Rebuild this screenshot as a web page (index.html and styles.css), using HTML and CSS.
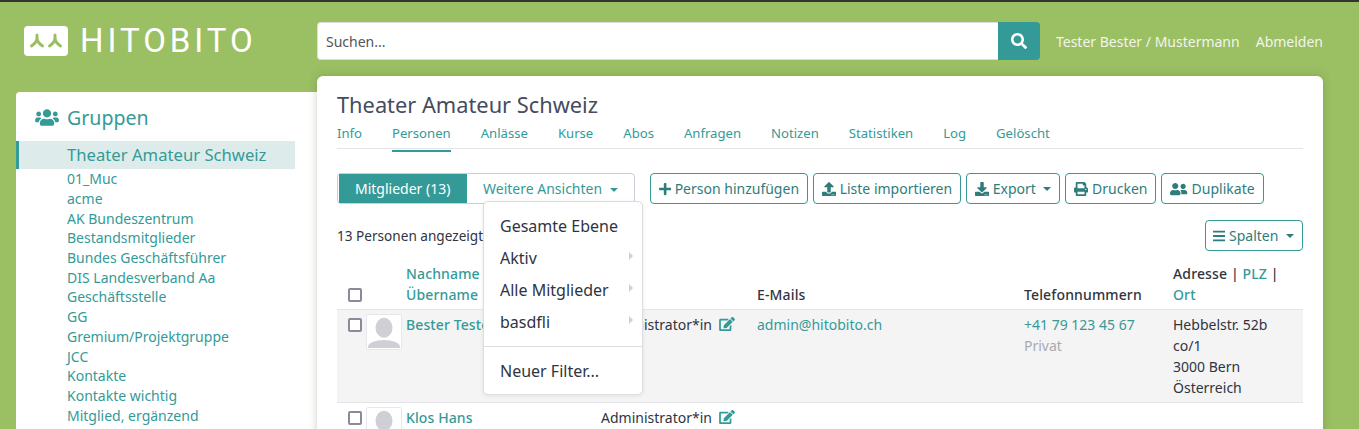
FILE: index.html
```html
<!DOCTYPE html>
<html lang="de">
<head>
  <meta charset="UTF-8">
  <meta name="viewport" content="width=device-width, initial-scale=1.0">
  <title>Theater Amateur Schweiz - Personen</title>
  <link rel="stylesheet" href="styles.css">
</head>
<body>
  <svg class="icon-defs" aria-hidden="true">
    <symbol id="i-users" viewBox="0 0 640 512"><path d="M96 224c35.3 0 64-28.7 64-64s-28.7-64-64-64-64 28.7-64 64 28.7 64 64 64zm448 0c35.3 0 64-28.7 64-64s-28.7-64-64-64-64 28.7-64 64 28.7 64 64 64zm32 32h-64c-17.6 0-33.5 7.1-45.1 18.6 40.3 22.1 68.9 62 75.1 109.4h66c17.7 0 32-14.3 32-32v-32c0-35.3-28.7-64-64-64zm-256 0c61.9 0 112-50.1 112-112S381.9 32 320 32 208 82.1 208 144s50.1 112 112 112zm76.8 32h-8.3c-20.8 10-43.9 16-68.5 16s-47.6-6-68.5-16h-8.3C179.6 288 128 339.6 128 403.2V432c0 26.5 21.5 48 48 48h288c26.5 0 48-21.5 48-48v-28.8c0-63.6-51.6-115.2-115.2-115.2zm-223.7-13.4C161.5 263.1 145.6 256 128 256H64c-35.3 0-64 28.7-64 64v32c0 17.7 14.3 32 32 32h65.9c6.3-47.4 34.9-87.3 75.2-109.4z"/></symbol>
    <symbol id="i-search" viewBox="0 0 512 512"><path d="M505 442.7L405.3 343c-4.5-4.5-10.6-7-17-7H372c27.6-35.3 44-79.7 44-128C416 93.1 322.9 0 208 0S0 93.1 0 208s93.1 208 208 208c48.3 0 92.7-16.4 128-44v16.3c0 6.4 2.5 12.5 7 17l99.7 99.7c9.4 9.4 24.6 9.4 33.9 0l28.3-28.3c9.4-9.4 9.4-24.6.1-34zM208 336c-70.7 0-128-57.2-128-128 0-70.7 57.2-128 128-128 70.7 0 128 57.2 128 128 0 70.7-57.2 128-128 128z"/></symbol>
    <symbol id="i-plus" viewBox="0 0 448 512"><path d="M416 208H272V64c0-17.67-14.33-32-32-32h-32c-17.67 0-32 14.33-32 32v144H32c-17.67 0-32 14.33-32 32v32c0 17.67 14.33 32 32 32h144v144c0 17.67 14.33 32 32 32h32c17.67 0 32-14.33 32-32V304h144c17.67 0 32-14.33 32-32v-32c0-17.67-14.33-32-32-32z"/></symbol>
    <symbol id="i-upload" viewBox="0 0 512 512"><path d="M296 384h-80c-13.3 0-24-10.7-24-24V192h-87.7c-17.8 0-26.7-21.5-14.1-34.1L242.3 5.700c7.500-7.500 19.800-7.500 27.300 0l152.200 152.200c12.600 12.600 3.700 34.100-14.100 34.100H320v168c0 13.300-10.700 24-24 24zm216-8v112c0 13.300-10.700 24-24 24H24c-13.300 0-24-10.700-24-24V376c0-13.300 10.700-24 24-24h136v8c0 30.900 25.100 56 56 56h80c30.900 0 56-25.100 56-56v-8h136c13.300 0 24 10.700 24 24zm-124 88c0-11-9-20-20-20s-20 9-20 20 9 20 20 20 20-9 20-20zm64 0c0-11-9-20-20-20s-20 9-20 20 9 20 20 20 20-9 20-20z"/></symbol>
    <symbol id="i-download" viewBox="0 0 512 512"><path d="M216 0h80c13.3 0 24 10.7 24 24v168h87.7c17.8 0 26.7 21.5 14.1 34.1L269.7 378.3c-7.5 7.5-19.8 7.5-27.3 0L90.1 226.1c-12.6-12.6-3.7-34.1 14.1-34.1H192V24c0-13.3 10.7-24 24-24zm296 376v112c0 13.3-10.7 24-24 24H24c-13.3 0-24-10.7-24-24V376c0-13.3 10.7-24 24-24h146.7l49 49c20.1 20.1 52.5 20.1 72.6 0l49-49H488c13.3 0 24 10.7 24 24zm-124 88c0-11-9-20-20-20s-20 9-20 20 9 20 20 20 20-9 20-20zm64 0c0-11-9-20-20-20s-20 9-20 20 9 20 20 20 20-9 20-20z"/></symbol>
    <symbol id="i-print" viewBox="0 0 512 512"><path d="M448 192V77.25c0-8.49-3.37-16.62-9.37-22.63L393.37 9.37c-6-6-14.14-9.37-22.63-9.37H96C78.33 0 64 14.33 64 32v160c-35.35 0-64 28.65-64 64v112c0 8.84 7.16 16 16 16h48v96c0 17.67 14.33 32 32 32h320c17.67 0 32-14.33 32-32v-96h48c8.84 0 16-7.16 16-16V256c0-35.35-28.65-64-64-64zm-64 256H128v-96h256v96zm0-224H128V64h192v48c0 8.84 7.16 16 16 16h48v96zm48 72c-13.25 0-24-10.75-24-24 0-13.26 10.75-24 24-24s24 10.74 24 24c0 13.25-10.75 24-24 24z"/></symbol>
    <symbol id="i-friends" viewBox="0 0 640 512"><path d="M192 256c61.9 0 112-50.1 112-112S253.9 32 192 32 80 82.1 80 144s50.1 112 112 112zm76.8 32h-8.3c-20.8 10-43.9 16-68.5 16s-47.6-6-68.5-16h-8.3C51.6 288 0 339.6 0 403.2V432c0 26.5 21.5 48 48 48h288c26.5 0 48-21.5 48-48v-28.8c0-63.6-51.6-115.2-115.2-115.2zM480 256c53 0 96-43 96-96s-43-96-96-96-96 43-96 96 43 96 96 96zm48 32h-3.8c-13.9 4.8-28.6 8-44.2 8s-30.3-3.2-44.2-8H432c-20.4 0-39.2 5.9-55.7 15.4 24.4 26.3 39.7 61.2 39.7 99.8v38.4c0 2.2-.5 4.3-.6 6.4H592c26.5 0 48-21.5 48-48 0-61.9-50.1-112-112-112z"/></symbol>
    <symbol id="i-bars" viewBox="0 0 448 512"><path d="M16 132h416c8.837 0 16-7.163 16-16V76c0-8.837-7.163-16-16-16H16C7.163 60 0 67.163 0 76v40c0 8.837 7.163 16 16 16zm0 160h416c8.837 0 16-7.163 16-16v-40c0-8.837-7.163-16-16-16H16c-8.837 0-16 7.163-16 16v40c0 8.837 7.163 16 16 16zm0 160h416c8.837 0 16-7.163 16-16v-40c0-8.837-7.163-16-16-16H16c-8.837 0-16 7.163-16 16v40c0 8.837 7.163 16 16 16z"/></symbol>
    <symbol id="i-edit" viewBox="0 0 576 512"><path d="M402.6 83.2l90.2 90.2c3.8 3.8 3.8 10 0 13.8L274.4 405.6l-92.8 10.3c-12.4 1.4-22.9-9.1-21.5-21.5l10.3-92.8L388.8 83.2c3.8-3.8 10-3.8 13.8 0zm162-22.9l-48.8-48.8c-15.2-15.2-39.9-15.2-55.2 0l-35.4 35.4c-3.8 3.8-3.8 10 0 13.8l90.2 90.2c3.8 3.8 10 3.8 13.8 0l35.4-35.4c15.2-15.3 15.2-40 0-55.2zM384 346.2V448H64V128h229.8c3.2 0 6.2-1.3 8.5-3.5l40-40c7.6-7.6 2.2-20.5-8.5-20.5H48C21.5 64 0 85.5 0 112v352c0 26.5 21.5 48 48 48h352c26.5 0 48-21.5 48-48V306.2c0-10.7-12.9-16-20.5-8.5l-40 40c-2.2 2.3-3.5 5.3-3.5 8.5z"/></symbol>
    <symbol id="i-avatar" viewBox="0 0 34 34"><ellipse cx="17" cy="12.700" rx="8.500" ry="10"/><path d="M1 33v-1C1 28 8 25 17 25s16 3 16 7v1z"/></symbol>
  </svg>

  <header class="topbar">
    <a class="logo" href="#">
      <svg class="logo-mark" viewBox="0 0 44 30" aria-hidden="true">
        <rect width="44" height="30" rx="4" fill="#fff"/>
        <path d="M13 9v3c0 3-2.500 6-5.500 8M13 12c0 3 2.500 6 5.500 8M31 9v3c0 3-2.500 6-5.500 8M31 12c0 3 2.500 6 5.500 8" fill="none" stroke="#9bbf63" stroke-width="3" stroke-linecap="round"/>
      </svg>
      <span class="logo-text">HITOBITO</span>
    </a>
    <form class="search">
      <input class="search-input" type="text" placeholder="Suchen...">
      <button class="search-btn" type="button"><svg class="icon"><use href="#i-search"/></svg></button>
    </form>
    <nav class="usernav">
      <a href="#">Tester Bester / Mustermann</a>
      <a href="#">Abmelden</a>
    </nav>
  </header>

  <div class="layout">
    <aside class="sidebar">
      <h2 class="side-title"><svg class="icon"><use href="#i-users"/></svg>Gruppen</h2>
      <a class="side-active" href="#">Theater Amateur Schweiz</a>
      <ul class="side-list">
        <li><a href="#">01_Muc</a></li>
        <li><a href="#">acme</a></li>
        <li><a href="#">AK Bundeszentrum</a></li>
        <li><a href="#">Bestandsmitglieder</a></li>
        <li><a href="#">Bundes Geschäftsführer</a></li>
        <li><a href="#">DIS Landesverband Aa</a></li>
        <li><a href="#">Geschäftsstelle</a></li>
        <li><a href="#">GG</a></li>
        <li><a href="#">Gremium/Projektgruppe</a></li>
        <li><a href="#">JCC</a></li>
        <li><a href="#">Kontakte</a></li>
        <li><a href="#">Kontakte wichtig</a></li>
        <li><a href="#">Mitglied, ergänzend</a></li>
      </ul>
    </aside>

    <main class="content">
      <h1 class="page-title">Theater Amateur Schweiz</h1>
      <nav class="tabs">
        <a href="#">Info</a>
        <a class="active" href="#">Personen</a>
        <a href="#">Anlässe</a>
        <a href="#">Kurse</a>
        <a href="#">Abos</a>
        <a href="#">Anfragen</a>
        <a href="#">Notizen</a>
        <a href="#">Statistiken</a>
        <a href="#">Log</a>
        <a href="#">Gelöscht</a>
      </nav>

      <div class="toolbar">
        <div class="btn-group">
          <a class="seg seg-on" href="#">Mitglieder (13)</a>
          <div class="seg-wrap">
            <a class="seg" href="#">Weitere Ansichten <span class="caret"></span></a>
            <ul class="dropdown">
              <li><a href="#">Gesamte Ebene</a></li>
              <li><a class="has-sub" href="#">Aktiv</a></li>
              <li><a class="has-sub" href="#">Alle Mitglieder</a></li>
              <li><a class="has-sub" href="#">basdfli</a></li>
              <li class="divider"></li>
              <li><a href="#">Neuer Filter...</a></li>
            </ul>
          </div>
        </div>
        <a class="btn" href="#"><svg class="icon icon-narrow"><use href="#i-plus"/></svg>Person hinzufügen</a>
        <a class="btn" href="#"><svg class="icon"><use href="#i-upload"/></svg>Liste importieren</a>
        <a class="btn" href="#"><svg class="icon"><use href="#i-download"/></svg>Export <span class="caret"></span></a>
        <a class="btn" href="#"><svg class="icon"><use href="#i-print"/></svg>Drucken</a>
        <a class="btn" href="#"><svg class="icon icon-wide"><use href="#i-friends"/></svg>Duplikate</a>
      </div>

      <div class="list-info">
        <span class="count">13 Personen angezeigt</span>
        <a class="btn" href="#"><svg class="icon icon-narrow"><use href="#i-bars"/></svg>Spalten <span class="caret"></span></a>
      </div>

      <table class="people">
        <colgroup>
          <col class="c-check"><col class="c-name"><col class="c-role"><col class="c-mail"><col class="c-phone"><col>
        </colgroup>
        <thead>
          <tr>
            <th class="check"><span class="box"></span></th>
            <th class="name-head"><a href="#">Nachname</a><br><a href="#">Übername</a></th>
            <th><a href="#">Rollen</a></th>
            <th>E-Mails</th>
            <th>Telefonnummern</th>
            <th>Adresse | <a href="#">PLZ</a> |<br><a href="#">Ort</a></th>
          </tr>
        </thead>
        <tbody>
          <tr class="odd">
            <td class="check"><span class="box"></span></td>
            <td>
              <div class="name-cell">
                <svg class="avatar"><use href="#i-avatar"/></svg>
                <a href="#">Bester Tester</a>
              </div>
            </td>
            <td>Administrator*in <svg class="icon edit"><use href="#i-edit"/></svg></td>
            <td><a href="#">admin@hitobito.ch</a></td>
            <td><a href="#">+41 79 123 45 67</a><br><span class="muted">Privat</span></td>
            <td>Hebbelstr. 52b<br>co/1<br>3000 Bern<br>Österreich</td>
          </tr>
          <tr>
            <td class="check"><span class="box"></span></td>
            <td>
              <div class="name-cell">
                <svg class="avatar"><use href="#i-avatar"/></svg>
                <a href="#">Klos Hans</a>
              </div>
            </td>
            <td>Administrator*in <svg class="icon edit"><use href="#i-edit"/></svg></td>
            <td></td>
            <td></td>
            <td></td>
          </tr>
        </tbody>
      </table>
    </main>
  </div>
</body>
</html>
```

FILE: styles.css
```css
* {
  box-sizing: border-box;
}

html, body {
  height: 429px;
  overflow: hidden;
}

body {
  margin: 0;
  border-top: 2px solid #333;
  background-color: #9bbf63;
  font-family: "Noto Sans", sans-serif;
  font-size: 14px;
  line-height: 21px;
  color: #30343f;
}

a {
  color: #349a98;
  text-decoration: none;
}

ul {
  margin: 0;
  padding: 0;
  list-style: none;
}

.icon-defs {
  display: none;
}

.icon {
  width: 14px;
  height: 14px;
  fill: currentColor;
  flex: none;
}

.icon-narrow {
  width: 12.250px;
}

.icon-wide {
  width: 17.500px;
}

/* header */
.topbar {
  display: flex;
  height: 64px;
  padding: 20px 36px 0 24px;
}

.logo {
  display: flex;
  width: 293px;
  height: 38px;
  padding-top: 4px;
  gap: 12px;
}

.logo-mark {
  width: 44px;
  height: 30px;
  flex: none;
}

.logo-text {
  font-family: "Roboto", sans-serif;
  font-size: 33px;
  line-height: 30px;
  letter-spacing: 3.950px;
  color: #fff;
}

.search {
  display: flex;
  width: 723px;
  height: 38px;
}

.search-input {
  flex: 1;
  padding: 0 8px;
  border: 1px solid #ddd;
  border-right: 0;
  border-radius: 4px 0 0 4px;
  font: 14px "Noto Sans", sans-serif;
  color: #30343f;
}

.search-input::placeholder {
  color: #555;
}

.search-btn {
  display: flex;
  align-items: center;
  justify-content: center;
  width: 42px;
  padding: 0;
  border: 0;
  border-radius: 0 4px 4px 0;
  background-color: #349a98;
  color: #fff;
}

.search-btn .icon {
  width: 16px;
  height: 16px;
}

.usernav {
  display: flex;
  flex: 1;
  justify-content: flex-end;
  gap: 16px;
  height: 38px;
  align-items: center;
}

.usernav a {
  color: #f2f5ea;
}

/* page body */
.layout {
  display: flex;
  align-items: flex-start;
  height: 363px;
  padding: 10px 0 0 16px;
  overflow: hidden;
}

.sidebar {
  width: 301px;
  height: 400px;
  margin-top: 16px;
  padding-top: 11px;
  border-radius: 4px 0 0 0;
  background-color: #fff;
}

.side-title {
  display: flex;
  align-items: center;
  gap: 8px;
  height: 28px;
  margin: 0 0 10px;
  padding-left: 19px;
  font-size: 19.600px;
  font-weight: 400;
  color: #349a98;
}

.side-title .icon {
  width: 24px;
  height: 19px;
}

.side-active {
  display: block;
  width: 279px;
  height: 28px;
  padding-left: 48px;
  border-left: 3px solid #349a98;
  background-color: #ddecea;
  font-size: 16.670px;
  line-height: 28px;
}

.side-list {
  padding: 0.150px 0 0 51px;
}

.side-list li {
  height: 19.720px;
  line-height: 19.720px;
}

.content {
  position: relative;
  width: 1006px;
  height: 420px;
  padding: 15px 20px 0;
  border-radius: 6px 6px 0 0;
  background-color: #fff;
  box-shadow: 0 0 8px rgba(60, 80, 30, 0.25);
}

.page-title {
  margin: 0;
  font-size: 21.800px;
  line-height: 28px;
  font-weight: 400;
  color: #454c5e;
}

.tabs {
  display: flex;
  gap: 30px;
  height: 30px;
  padding-top: 4px;
  border-bottom: 1px solid #e4e4e8;
  font-size: 13.130px;
}

.tabs a {
  line-height: 21px;
}

.tabs .active {
  border-bottom: 2px solid #349a98;
  height: 29px;
}

/* toolbar */
.toolbar {
  display: flex;
  gap: 5px;
  margin-top: 24px;
}

.btn-group {
  display: flex;
  height: 31px;
  margin-right: 10px;
  border: 1px solid #ccd;
  border-radius: 4px;
}

.seg {
  display: block;
  height: 29px;
  padding: 0 16px;
  line-height: 29px;
}

.seg-on {
  width: 128px;
  margin-left: 1px;
  background-color: #349a98;
  color: #fff;
}

.seg-wrap {
  position: relative;
}

.caret {
  display: inline-block;
  margin-left: 4px;
  vertical-align: 2px;
  border-top: 4px solid;
  border-left: 4px solid transparent;
  border-right: 4px solid transparent;
}

.btn {
  display: flex;
  align-items: center;
  gap: 3.640px;
  height: 31px;
  padding: 0 8px;
  border: 1px solid #349a98;
  border-radius: 4px;
  color: #2f7d7b;
  white-space: nowrap;
}

.dropdown {
  position: absolute;
  z-index: 5;
  top: 27px;
  left: 16px;
  width: 160px;
  height: 194px;
  padding: 8px 0;
  border: 1px solid #ddd;
  border-radius: 5px;
  background-color: #fff;
  box-shadow: 0 1px 4px rgba(0, 0, 0, 0.08);
  font-size: 16px;
}

.dropdown a {
  position: relative;
  display: block;
  height: 32px;
  padding: 4px 16px;
  line-height: 24px;
  color: #30343f;
}

.dropdown .has-sub::after {
  content: "";
  position: absolute;
  top: 10px;
  right: 9px;
  border-left: 4px solid #d0d0d0;
  border-top: 4px solid transparent;
  border-bottom: 4px solid transparent;
}

.divider {
  height: 1px;
  margin: 8px 0;
  background-color: #ddd;
}

.list-info {
  display: flex;
  justify-content: space-between;
  align-items: center;
  margin-top: 16px;
  height: 31px;
}

.list-info .btn {
  padding-left: 7px;
}

.count {
  font-size: 13.600px;
}

/* table */
.people {
  width: 966px;
  margin-top: 6px;
  border-collapse: collapse;
  table-layout: fixed;
}

.c-check { width: 29px; }
.c-name { width: 235px; }
.c-role { width: 156px; }
.c-mail { width: 267px; }
.c-phone { width: 149px; }

.people th {
  padding: 6px 0 4px;
  border-bottom: 1px solid #e4e4e8;
  vertical-align: bottom;
  text-align: left;
  font-weight: 500;
  letter-spacing: 0.140px;
}

.people td {
  padding: 4px 0;
  border-bottom: 1px solid #e4e4e8;
  vertical-align: top;
}

.people .odd td {
  background-color: #f4f4f5;
}

.people .check {
  padding-left: 11px;
}

.box {
  display: block;
  width: 14px;
  height: 14px;
  margin-top: 4px;
  border: 2px solid #8a8a9a;
  border-radius: 2px;
  background-color: #fff;
}

.people th.check .box {
  margin-bottom: 3px;
}

.name-head {
  padding-left: 40px !important;
}

.name-cell {
  display: flex;
  gap: 4px;
}

.name-cell a {
  font-weight: 500;
  letter-spacing: 0.100px;
}

.avatar {
  flex: none;
  width: 36px;
  height: 36px;
  border: 1px solid #e8e8ec;
  border-radius: 2px;
  background-color: #fff;
  fill: #cfcfd6;
}

.edit {
  width: 16px;
  height: 14px;
  margin-left: 3px;
  vertical-align: -1px;
  color: #349a98;
}

.muted {
  color: #a9a9b2;
}
```
